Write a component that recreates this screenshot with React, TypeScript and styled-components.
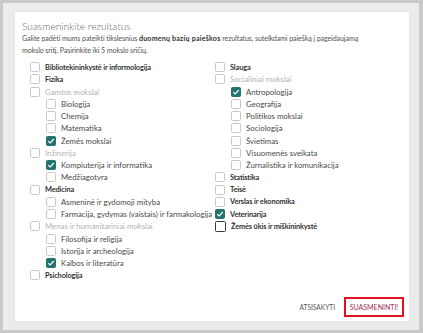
import React from "react";
import styled, { createGlobalStyle } from "styled-components";

const Global = createGlobalStyle`
  html, body { margin: 0; padding: 0; }
  body { font-family: "Lato", "Noto Sans", sans-serif; background: #e9e9e9; }
`;

const Frame = styled.div`
  width: 423px;
  height: 333px;
  box-sizing: border-box;
  border: 3px solid #c9c9c9;
  border-right-width: 4px;
  background: #ebebeb;
  padding: 9px 0 0 12px;
`;

const Modal = styled.div`
  width: 394px;
  height: 309px;
  box-sizing: border-box;
  background: #fff;
  box-shadow: 0 0 2px rgba(0, 0, 0, 0.08);
  padding: 8px 5px 4px 7px;
  display: flex;
  flex-direction: column;
`;

const Title = styled.h1`
  margin: 0;
  font-size: 10.2px;
  line-height: 13px;
  font-weight: 300;
  color: #666;
`;

const Desc = styled.p`
  margin: 0;
  font-size: 7.1px;
  line-height: 11.5px;
  letter-spacing: -0.1px;
  color: #555;
  white-space: nowrap;
  b { color: #333; font-weight: 700; letter-spacing: 0.2px; }
`;

const Columns = styled.div`
  display: grid;
  grid-template-columns: 185px 1fr;
  padding-left: 8px;
  margin-top: 5px;
`;

const Col = styled.div`
  display: flex;
  flex-direction: column;
`;

const Row = styled.div<{ $child?: boolean }>`
  height: 12.25px;
  display: flex;
  align-items: center;
  gap: 5px;
  padding-left: ${(p) => (p.$child ? 16 : 0)}px;
`;

const Box = styled.span<{ $checked?: boolean; $focus?: boolean }>`
  box-sizing: border-box;
  flex: none;
  width: ${(p) => (p.$focus ? 11 : 10)}px;
  height: ${(p) => (p.$focus ? 11 : 10)}px;
  border-radius: 1.5px;
  border: ${(p) =>
    p.$focus ? "1.5px solid #3a3a3a" : p.$checked ? "1px solid #23736f" : "1px solid #c8c8c8"};
  background: ${(p) => (p.$checked ? "#23736f" : "#fff")};
  display: flex;
  align-items: center;
  justify-content: center;
`;

const Label = styled.span<{ $kind: "top" | "group" | "child" }>`
  font-size: ${(p) => (p.$kind === "top" ? 7.4 : 7.8)}px;
  letter-spacing: ${(p) => (p.$kind === "top" ? -0.14 : 0)}px;
  white-space: nowrap;
  color: ${(p) => (p.$kind === "group" ? "#b3b3b3" : p.$kind === "top" ? "#333" : "#4a4a4a")};
  font-weight: ${(p) => (p.$kind === "top" ? 700 : 400)};
`;

const Footer = styled.div`
  margin-top: auto;
  display: flex;
  justify-content: flex-end;
  align-items: center;
  gap: 9px;
`;

const Cancel = styled.button`
  background: none;
  border: none;
  padding: 0;
  font-family: inherit;
  font-size: 6.6px;
  color: #555;
`;

const Confirm = styled.button`
  box-sizing: border-box;
  width: 60px;
  height: 20px;
  background: #fff;
  border: 2px solid #e3111e;
  padding: 0;
  font-family: inherit;
  font-size: 7px;
  color: #a52f5a;
`;

type Item = { label: string; kind: "top" | "group" | "child"; checked?: boolean; focus?: boolean };

const left: Item[] = [
  { label: "Bibliotekininkystė ir informologija", kind: "top" },
  { label: "Fizika", kind: "top" },
  { label: "Gamtos mokslai", kind: "group" },
  { label: "Biologija", kind: "child" },
  { label: "Chemija", kind: "child" },
  { label: "Matematika", kind: "child" },
  { label: "Žemės mokslai", kind: "child", checked: true },
  { label: "Inžinerija", kind: "group" },
  { label: "Kompiuterija ir informatika", kind: "child", checked: true },
  { label: "Medžiagotyra", kind: "child" },
  { label: "Medicina", kind: "top" },
  { label: "Asmeninė ir gydomoji mityba", kind: "child" },
  { label: "Farmacija, gydymas (vaistais) ir farmakologija", kind: "child" },
  { label: "Menas ir humanitariniai mokslai", kind: "group" },
  { label: "Filosofija ir religija", kind: "child" },
  { label: "Istorija ir archeologija", kind: "child" },
  { label: "Kalbos ir literatūra", kind: "child", checked: true },
  { label: "Psichologija", kind: "top" },
];

const right: Item[] = [
  { label: "Slauga", kind: "top" },
  { label: "Socialiniai mokslai", kind: "group" },
  { label: "Antropologija", kind: "child", checked: true },
  { label: "Geografija", kind: "child" },
  { label: "Politikos mokslai", kind: "child" },
  { label: "Sociologija", kind: "child" },
  { label: "Švietimas", kind: "child" },
  { label: "Visuomenės sveikata", kind: "child" },
  { label: "Žurnalistika ir komunikacija", kind: "child" },
  { label: "Statistika", kind: "top" },
  { label: "Teisė", kind: "top" },
  { label: "Verslas ir ekonomika", kind: "top" },
  { label: "Veterinarija", kind: "top", checked: true },
  { label: "Žemės ūkis ir miškininkystė", kind: "top", focus: true },
];

const Check = () => (
  <svg width="8" height="8" viewBox="0 0 8 8">
    <polyline points="1.3,4.2 3.2,6 6.8,2" fill="none" stroke="#fff" strokeWidth="1.2" />
  </svg>
);

const List = ({ items }: { items: Item[] }) => (
  <Col>
    {items.map((it) => (
      <Row key={it.label} $child={it.kind === "child"}>
        <Box $checked={it.checked} $focus={it.focus}>{it.checked && <Check />}</Box>
        <Label $kind={it.kind}>{it.label}</Label>
      </Row>
    ))}
  </Col>
);

export default function App() {
  return (
    <>
      <Global />
      <Frame>
        <Modal>
          <Title>Suasmeninkite rezultatus</Title>
          <Desc>
            Galite padėti mums pateikti tikslesnius <b>duomenų bazių paieškos</b> rezultatus, sutelkdami paiešką į
            pageidaujamą
            <br />
            mokslo sritį. Pasirinkite iki 5 mokslo sričių.
          </Desc>
          <Columns>
            <List items={left} />
            <List items={right} />
          </Columns>
          <Footer>
            <Cancel>ATSISAKYTI</Cancel>
            <Confirm>SUASMENINTI!</Confirm>
          </Footer>
        </Modal>
      </Frame>
    </>
  );
}
